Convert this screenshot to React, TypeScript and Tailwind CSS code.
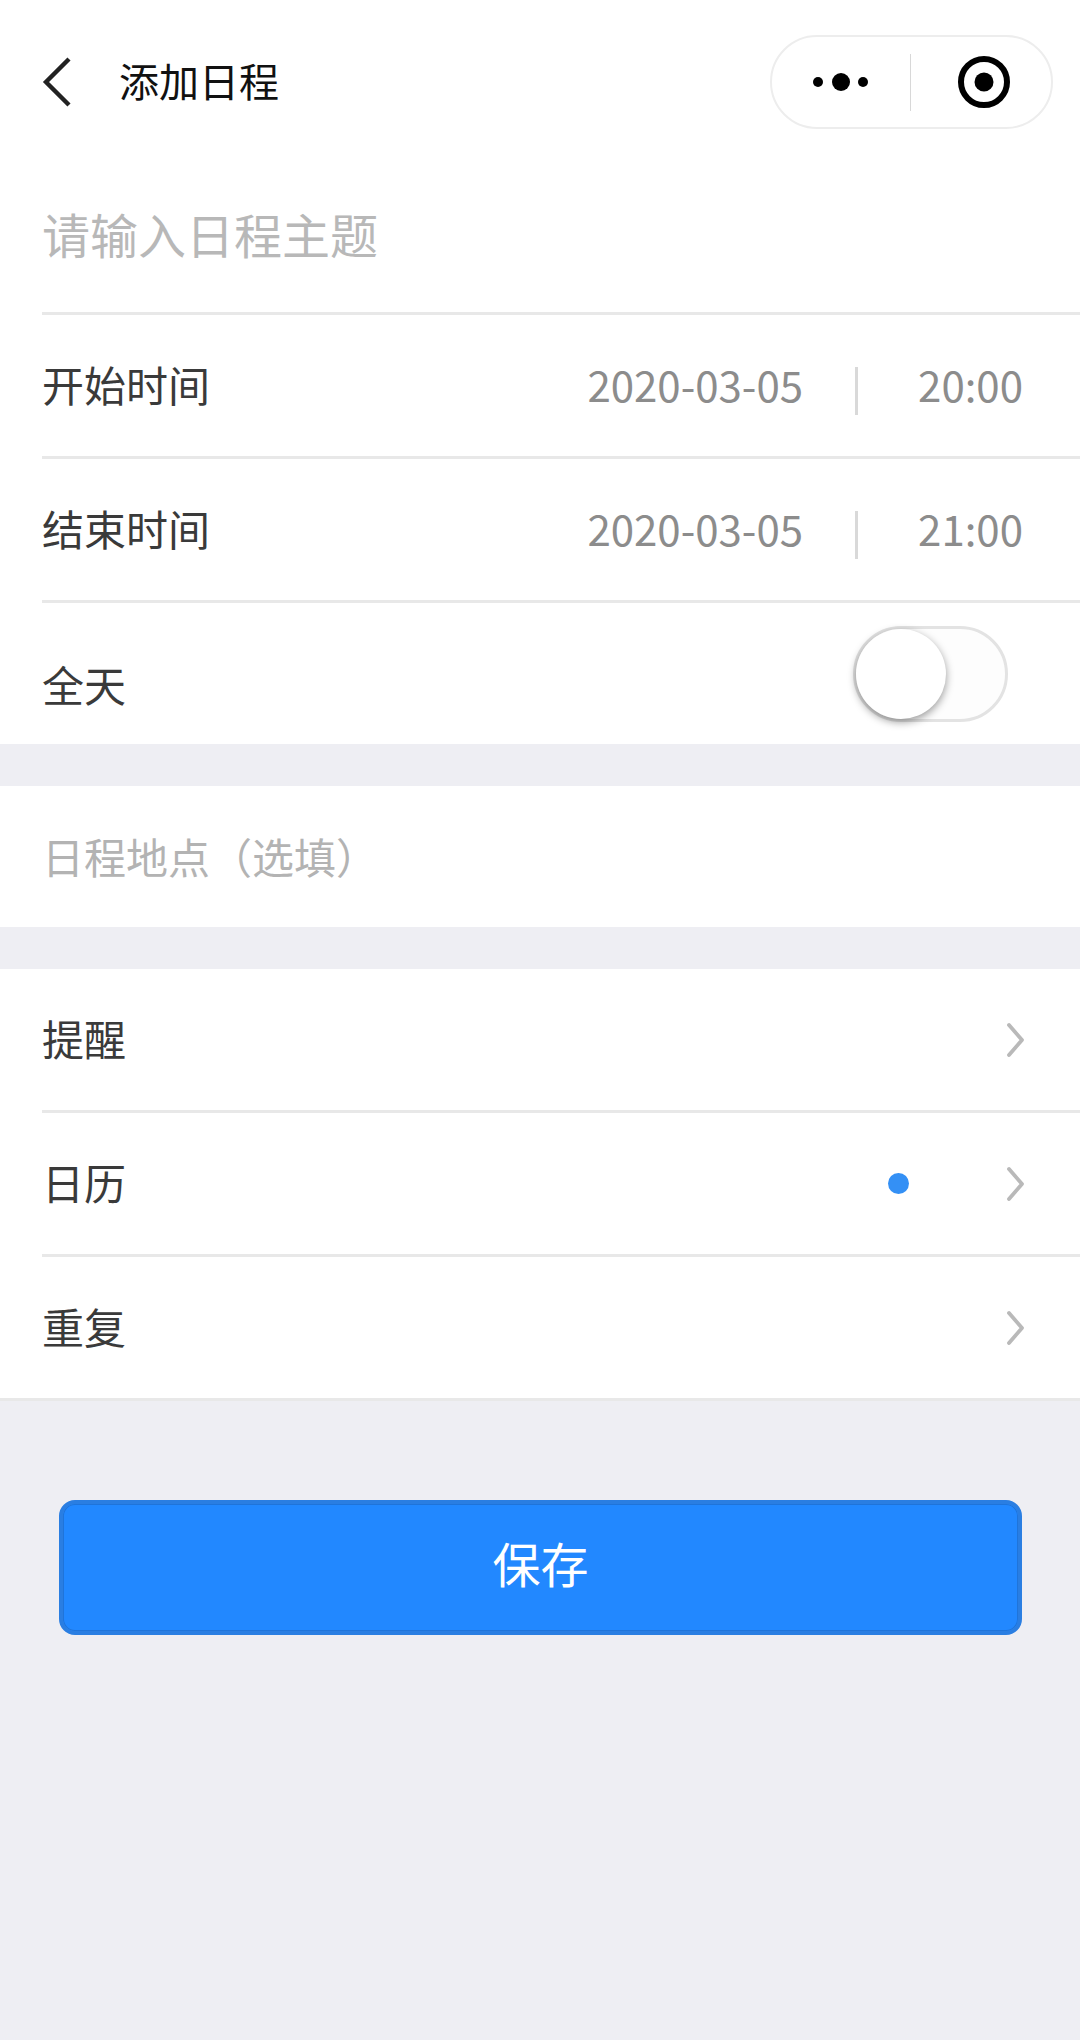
import React from 'react';

const font = { fontFamily: '"Noto Sans CJK SC", "Noto Sans", sans-serif' };

const Chevron = () => (
  <svg width="24" height="40" viewBox="0 0 24 40" fill="none" className="shrink-0">
    <path d="M7 5 L20 20 L7 35" stroke="#b9b9b9" strokeWidth="3.8" strokeLinecap="round" strokeLinejoin="round" />
  </svg>
);

const TimeRow = ({ label, date, time }: { label: string; date: string; time: string }) => (
  <div className="h-[144px] ml-[42px] pr-[57px] border-b-[3px] border-[#e8e8e8] flex items-center justify-between">
    <span className="text-[42px] text-[#3a3a3a] leading-none pb-[3px]">{label}</span>
    <div className="flex items-center text-[42px] text-[#8c8c8c] leading-none">
      <span className="pb-[3px]">{date}</span>
      <div className="w-[3px] h-[48px] mt-[10px] bg-[#d9d9d9] ml-[52px] mr-[60px]" />
      <span className="pb-[3px]">{time}</span>
    </div>
  </div>
);

const LinkRow = ({ label, dot, last }: { label: string; dot?: boolean; last?: boolean }) => (
  <div className={last ? 'h-[144px] pl-[42px] pr-[54px] border-b-[3px] border-[#e8e8e8] flex items-center justify-between' : 'h-[144px] ml-[42px] pr-[54px] border-b-[3px] border-[#e8e8e8] flex items-center justify-between'}>
    <span className="text-[42px] text-[#3a3a3a] leading-none pb-[3px]">{label}</span>
    <div className="flex items-center">
      {dot && <div className="w-[21px] h-[21px] rounded-full bg-[#3490f5] mr-[93px]" />}
      <Chevron />
    </div>
  </div>
);

export default function App() {
  return (
    <div className="w-[1080px] h-[2040px] bg-[#eeeef3] overflow-hidden" style={font}>
      <div className="bg-white">
        {/* nav bar */}
        <div className="h-[130px] pt-[35px] pl-[41px] pr-[27px] flex items-start justify-between">
          <div className="flex items-center h-[93px]">
            <svg width="32" height="54" viewBox="0 0 32 54" fill="none">
              <path d="M28 4 L5 27 L28 50" stroke="#222" strokeWidth="4.4" />
            </svg>
            <span className="ml-[46px] text-[40px] text-[#111] leading-none pb-[3px]">添加日程</span>
          </div>
          <div className="w-[283px] h-[94px] rounded-full border-2 border-[#ededed] bg-white flex items-center">
            <svg width="138" height="60" viewBox="0 0 138 60" className="shrink-0">
              <circle cx="46" cy="30" r="5" fill="#000" />
              <circle cx="69" cy="30" r="9" fill="#000" />
              <circle cx="91" cy="30" r="5" fill="#000" />
            </svg>
            <div className="w-[1px] h-[57px] bg-[#d8d8d8]" />
            <svg width="140" height="60" viewBox="0 0 140 60" className="shrink-0">
              <circle cx="73" cy="30" r="23" fill="none" stroke="#000" strokeWidth="6" />
              <circle cx="73" cy="30" r="9.5" fill="#000" />
            </svg>
          </div>
        </div>

        {/* subject */}
        <div className="h-[185px] ml-[42px] pt-[24px] border-b-[3px] border-[#e8e8e8] flex items-center">
          <span className="text-[48px] text-[#b8b8b8] leading-none">请输入日程主题</span>
        </div>

        <TimeRow label="开始时间" date="2020-03-05" time="20:00" />
        <TimeRow label="结束时间" date="2020-03-05" time="21:00" />

        {/* all day */}
        <div className="h-[141px] pl-[42px] pr-[72px] flex items-center justify-between">
          <span className="text-[42px] text-[#3a3a3a] leading-none pt-[20px]">全天</span>
          <div className="w-[155px] h-[96px] rounded-full border-[3px] border-[#e3e3e3] bg-[#fdfdfd]">
            <div className="w-[90px] h-[90px] rounded-full bg-white shadow-[0_3px_8px_rgba(0,0,0,0.4)]" />
          </div>
        </div>
      </div>

      {/* location */}
      <div className="mt-[42px] h-[141px] bg-white pl-[42px] flex items-center">
        <span className="text-[42px] text-[#b3b3b3] leading-none pb-[2px]">日程地点（选填）</span>
      </div>

      {/* links */}
      <div className="mt-[42px] bg-white">
        <LinkRow label="提醒" />
        <LinkRow label="日历" dot />
        <LinkRow label="重复" last />
      </div>

      <button className="mt-[99px] ml-[59px] w-[963px] h-[135px] pb-[11px] rounded-[16px] bg-[#2288ff] border-4 border-[#2a7ee2] shadow-[inset_0_0_0_1px_#1f74da] text-white text-[48px] leading-none">
        保存
      </button>
    </div>
  );
}
